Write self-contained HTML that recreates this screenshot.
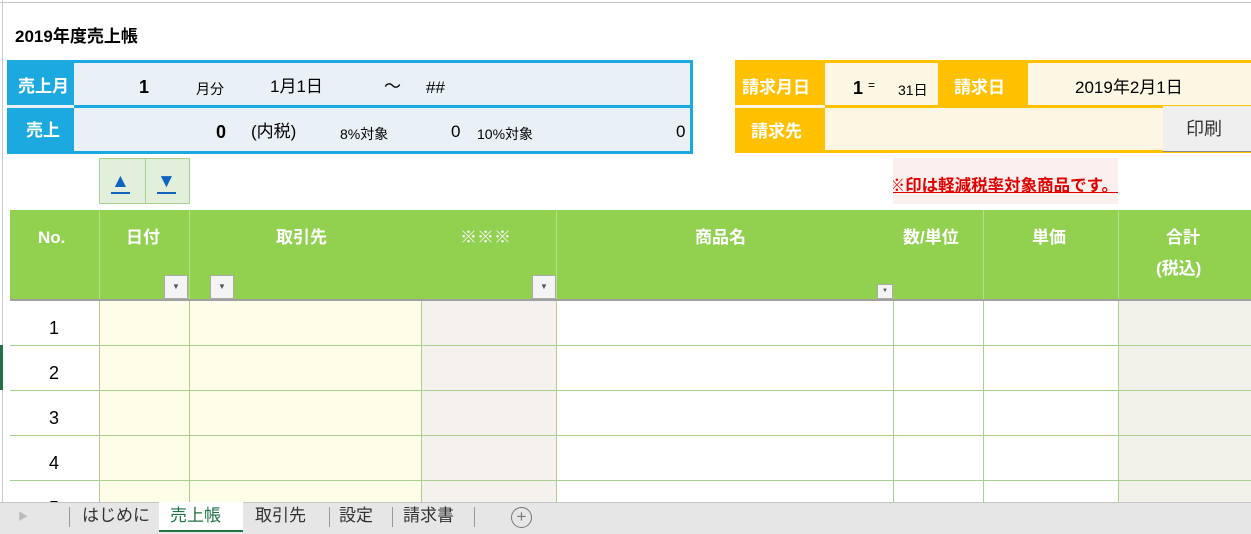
<!DOCTYPE html>
<html><head><meta charset="utf-8"><style>
*{margin:0;padding:0;box-sizing:border-box}
body{width:1251px;height:534px;overflow:hidden;background:#fff;position:relative;font-family:"Liberation Sans","Noto Sans CJK JP",sans-serif;color:#000}
.a{position:absolute}
.t{position:absolute;white-space:nowrap;line-height:22px}
.b{font-weight:bold}
</style></head><body>
<div class="a" style="left:0;top:0;width:1251px;height:3px;border-bottom:1px solid #c8c8c8;background:#fff"></div>
<div class="a" style="left:2px;top:0;width:1px;height:502px;background:#c8c8c8"></div>
<div class="t b" style="left:15px;top:26px;font-size:17px">2019年度売上帳</div>

<!-- blue box -->
<div class="a" style="left:7px;top:60px;width:686px;height:94px;background:#1ba9e0"></div>
<div class="a" style="left:74px;top:63px;width:616px;height:42px;background:#e9f1f6"></div>
<div class="a" style="left:74px;top:108px;width:616px;height:43px;background:#e9f1f6"></div>
<div class="a" style="left:7px;top:105px;width:67px;height:3px;background:#e9f1f6"></div>
<div class="t b" style="left:18px;top:76px;font-size:17px;color:#fff">売上月</div>
<div class="t b" style="left:26px;top:120px;font-size:17px;color:#fff">売上</div>
<div class="t b" style="left:139px;top:76px;font-size:18px">1</div>
<div class="t" style="left:196px;top:78px;font-size:14px">月分</div>
<div class="t" style="left:270px;top:76px;font-size:17px">1月1日</div>
<div class="t" style="left:384px;top:76px;font-size:17px">～</div>
<div class="t" style="left:426px;top:77px;font-size:17px">##</div>
<div class="t b" style="left:216px;top:121px;font-size:18px">0</div>
<div class="t" style="left:251px;top:121px;font-size:17px">(内税)</div>
<div class="t" style="left:340px;top:123px;font-size:14px">8%対象</div>
<div class="t" style="left:451px;top:121px;font-size:17px">0</div>
<div class="t" style="left:477px;top:123px;font-size:14px">10%対象</div>
<div class="t" style="left:676px;top:121px;font-size:17px">0</div>

<!-- arrows -->
<div class="a" style="left:99px;top:158px;width:91px;height:46px;background:#e2efda;border:1px solid #a9d08e"></div>
<div class="a" style="left:145px;top:158px;width:1px;height:46px;background:#a9d08e"></div>
<div class="t" style="left:111px;top:172px;font-size:19px;color:#1064c0;border-bottom:2px solid #1064c0;line-height:20px">▲</div>
<div class="t" style="left:157px;top:172px;font-size:19px;color:#1064c0;border-bottom:2px solid #1064c0;line-height:20px">▼</div>

<!-- orange box -->
<div class="a" style="left:735px;top:60px;width:516px;height:93px;background:#ffc000"></div>
<div class="a" style="left:825px;top:63px;width:113px;height:42px;background:#fdf6e3"></div>
<div class="a" style="left:1028px;top:63px;width:223px;height:42px;background:#fdf6e3"></div>
<div class="a" style="left:825px;top:108px;width:426px;height:42px;background:#fdf6e3"></div>
<div class="a" style="left:735px;top:105px;width:90px;height:3px;background:#fdf6e3"></div>
<div class="t b" style="left:742px;top:77px;font-size:17px;color:#fff">請求月日</div>
<div class="t b" style="left:954px;top:77px;font-size:17px;color:#fff">請求日</div>
<div class="t b" style="left:751px;top:121px;font-size:17px;color:#fff">請求先</div>
<div class="t b" style="left:853px;top:77px;font-size:18px">1</div>
<div class="t" style="left:868px;top:74px;font-size:12px">=</div>
<div class="t" style="left:898px;top:79px;font-size:14px">31日</div>
<div class="t" style="left:1075px;top:77px;font-size:17px">2019年2月1日</div>
<div class="a" style="left:1163px;top:106px;width:88px;height:46px;background:#efefef;border-bottom:1px solid #888"></div>
<div class="t" style="left:1186px;top:118px;font-size:18px;color:#333">印刷</div>

<div class="a" style="left:893px;top:158px;width:225px;height:46px;background:#fbf0ee;overflow:hidden">
<div class="t b" style="right:0;top:17px;font-size:16.5px;color:#e00000;text-decoration:underline">※印は軽減税率対象商品です。</div>
</div>

<!-- header -->
<div class="a" style="left:10px;top:210px;width:1241px;height:90px;background:#92d050"></div>
<div class="a" style="left:99px;top:210px;width:1px;height:90px;background:#b5e08a"></div>
<div class="a" style="left:189px;top:210px;width:1px;height:90px;background:#b5e08a"></div>
<div class="a" style="left:556px;top:210px;width:1px;height:90px;background:#b5e08a"></div>
<div class="a" style="left:983px;top:210px;width:1px;height:90px;background:#b5e08a"></div>
<div class="a" style="left:1118px;top:210px;width:1px;height:90px;background:#b5e08a"></div>
<div class="t b" style="left:38px;top:227px;font-size:17px;color:#fff">No.</div>
<div class="t b" style="left:126px;top:227px;font-size:17px;color:#fff">日付</div>
<div class="t b" style="left:276px;top:227px;font-size:17px;color:#fff">取引先</div>
<div class="t b" style="left:460px;top:227px;font-size:17px;color:#fff">※※※</div>
<div class="t b" style="left:695px;top:227px;font-size:17px;color:#fff">商品名</div>
<div class="t b" style="left:903px;top:227px;font-size:17px;color:#fff">数/単位</div>
<div class="t b" style="left:1032px;top:227px;font-size:17px;color:#fff">単価</div>
<div class="t b" style="left:1166px;top:227px;font-size:17px;color:#fff">合計</div>
<div class="t b" style="left:1156px;top:258px;font-size:17px;color:#fff">(税込)</div>
<div class="a" style="left:164px;top:275px;width:24px;height:24px;background:#f4f4f4;border:1px solid #aaa;font-size:8px;color:#555;text-align:center;line-height:22px">▼</div>
<div class="a" style="left:210px;top:275px;width:24px;height:24px;background:#f4f4f4;border:1px solid #aaa;font-size:8px;color:#555;text-align:center;line-height:22px">▼</div>
<div class="a" style="left:532px;top:275px;width:24px;height:24px;background:#f4f4f4;border:1px solid #aaa;font-size:8px;color:#555;text-align:center;line-height:22px">▼</div>
<div class="a" style="left:877px;top:284px;width:16px;height:15px;background:#f4f4f4;border:1px solid #aaa;font-size:6px;color:#555;text-align:center;line-height:13px">▼</div>
<div class="a" style="left:10px;top:299px;width:1241px;height:2px;background:#a0a0a0"></div>

<!-- body -->
<div class="a" style="left:10px;top:301px;width:1241px;height:201px;background:#fff"></div>
<div class="a" style="left:99px;top:301px;width:322px;height:201px;background:#fdfde8"></div>
<div class="a" style="left:421px;top:301px;width:135px;height:201px;background:#f5f1ec"></div>
<div class="a" style="left:1118px;top:301px;width:133px;height:201px;background:#f1f1ea"></div>
<div class="a" style="left:99px;top:301px;width:1px;height:201px;background:#a9d08e"></div>
<div class="a" style="left:189px;top:301px;width:1px;height:201px;background:#a9d08e"></div>
<div class="a" style="left:421px;top:301px;width:1px;height:201px;background:#a9d08e"></div>
<div class="a" style="left:556px;top:301px;width:1px;height:201px;background:#a9d08e"></div>
<div class="a" style="left:893px;top:301px;width:1px;height:201px;background:#a9d08e"></div>
<div class="a" style="left:983px;top:301px;width:1px;height:201px;background:#a9d08e"></div>
<div class="a" style="left:1118px;top:301px;width:1px;height:201px;background:#a9d08e"></div>
<div class="a" style="left:10px;top:345px;width:1241px;height:1px;background:#a9d08e"></div>
<div class="a" style="left:10px;top:390px;width:1241px;height:1px;background:#a9d08e"></div>
<div class="a" style="left:10px;top:435px;width:1241px;height:1px;background:#a9d08e"></div>
<div class="a" style="left:10px;top:480px;width:1241px;height:1px;background:#a9d08e"></div>
<div class="a" style="left:0;top:345px;width:3px;height:45px;background:#217346"></div>
<div class="t" style="left:49px;top:317px;font-size:18px">1</div>
<div class="t" style="left:49px;top:362px;font-size:18px">2</div>
<div class="t" style="left:49px;top:407px;font-size:18px">3</div>
<div class="t" style="left:49px;top:452px;font-size:18px">4</div>
<div class="t" style="left:49px;top:497px;font-size:18px">5</div>

<!-- tab bar -->
<div class="a" style="left:0;top:502px;width:1251px;height:32px;background:#e6e6e6;border-top:1px solid #c6c6c6"></div>
<div class="t" style="left:18px;top:507px;font-size:10px;color:#bbb">▶</div>
<div class="a" style="left:69px;top:507px;width:1px;height:20px;background:#999"></div>
<div class="t" style="left:82px;top:505px;font-size:17px;color:#333">はじめに</div>
<div class="a" style="left:159px;top:502px;width:84px;height:30px;background:#fff;border-bottom:2px solid #217346"></div>
<div class="t" style="left:170px;top:505px;font-size:17px;color:#217346">売上帳</div>
<div class="t" style="left:255px;top:505px;font-size:17px;color:#333">取引先</div>
<div class="a" style="left:329px;top:507px;width:1px;height:20px;background:#999"></div>
<div class="t" style="left:339px;top:505px;font-size:17px;color:#333">設定</div>
<div class="a" style="left:392px;top:507px;width:1px;height:20px;background:#999"></div>
<div class="t" style="left:403px;top:505px;font-size:17px;color:#333">請求書</div>
<div class="a" style="left:474px;top:507px;width:1px;height:20px;background:#999"></div>
<div class="a" style="left:511px;top:507px;width:21px;height:21px;border:1.5px solid #777;border-radius:50%;text-align:center;line-height:17px;font-size:17px;color:#777">+</div>
</body></html>
